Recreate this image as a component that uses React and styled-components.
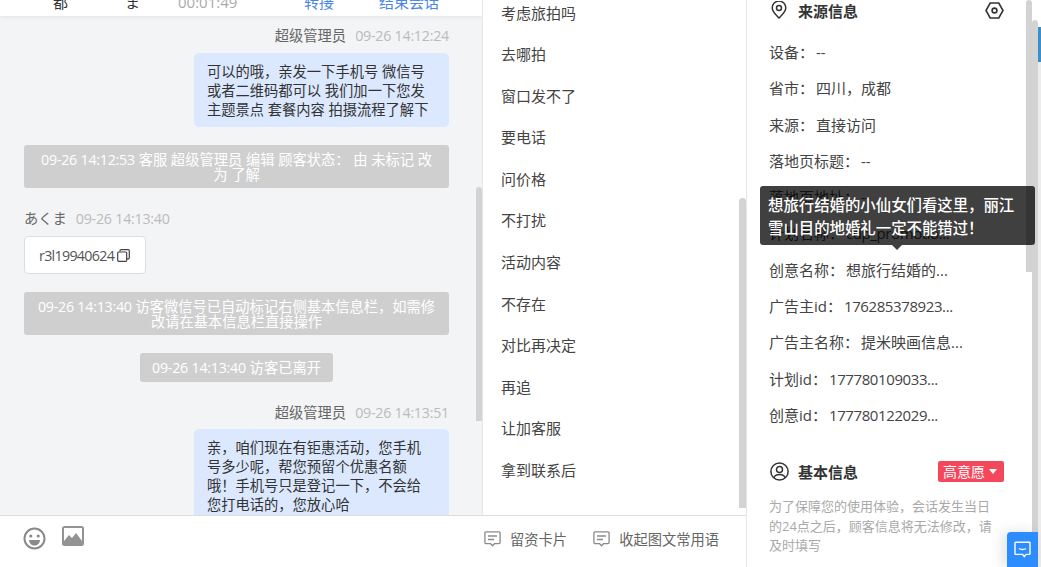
import React from 'react';
import styled, { createGlobalStyle } from 'styled-components';

const Global = createGlobalStyle`
  html, body { margin: 0; padding: 0; background: #fff; overflow: hidden; }
  * { box-sizing: border-box; }
  body { font-family: "Open Sans", "Noto Sans CJK SC", sans-serif; font-size: 14.28px; color: #333; }
`;

const Page = styled.div`
  position: relative; width: 1041px; height: 567px; display: flex; overflow: hidden; background: #fff;
`;
const Workspace = styled.div`
  width: 747px; height: 567px; display: flex; flex-direction: column; border-right: 1px solid #e6e6e6;
`;
const Body = styled.div`
  flex: 1; min-height: 0; display: flex;
`;
const ChatColumn = styled.div`
  position: relative; width: 482px; display: flex; flex-direction: column; background: #f3f4f6; overflow: hidden;
`;
const SessionBar = styled.div`
  height: 16px; flex: none; background: #fff; overflow: hidden; box-shadow: 0 1px 4px rgba(0,0,0,.08); position: relative; z-index: 1;
`;
const SessionRow = styled.div`
  display: flex; height: 20px; margin-top: -8px; line-height: 20px; padding-left: 53px; font-size: 15px;
`;
const SessionCell = styled.span`
  width: ${p => p.$w}px; flex: none; color: ${p => p.$c || '#333'};
`;
const Messages = styled.div`
  flex: 1; min-height: 0; padding: 10px 33px 0 24px; display: flex; flex-direction: column; overflow: hidden;
`;
const Meta = styled.div`
  display: flex; gap: 9px; height: 20px; line-height: 20px; justify-content: ${p => p.$left ? 'flex-start' : 'flex-end'}; color: #666; margin-top: ${p => p.$mt || 0}px; flex: none;
`;
const Stamp = styled.span`letter-spacing: -.25px;`;
const Time = styled(Stamp)`color: #bbb;`;
const Bubble = styled.div`
  align-self: flex-end; width: 255px; flex: none; margin-top: ${p => p.$mt || 7}px; padding: 9px 14px 8px 13px; background: #dbe8fe; border-radius: 5px; line-height: 19px; color: #333;
`;
const Notice = styled.div`
  align-self: ${p => p.$fit ? 'center' : 'stretch'}; flex: none; margin-top: 18px; padding: ${p => p.$fit ? '7px 12px' : '7px 12px 6px'}; background: #cfcfcf; border-radius: 3px; color: #fff; text-align: center; line-height: 15px;
`;
const ContactCard = styled.div`
  align-self: flex-start; flex: none; margin-top: 7px; width: 122px; height: 38px; display: flex; align-items: center; padding-left: 14px; gap: 3px; background: #fff; border: 1px solid #ddd; border-radius: 4px; color: #555; letter-spacing: -.7px;
`;
const Thumb = styled.div`
  position: absolute; background: #d3d3d3; border-radius: 4px 4px 0 0; width: ${p => p.$w || 6}px;
  left: ${p => p.$x}px; top: ${p => p.$y}px; height: ${p => p.$h}px; z-index: 2;
`;
const ReplyColumn = styled.div`
  position: relative; width: 264px; background: #fff; border-left: 1px solid #e6e6e6; overflow: hidden;
`;
const ReplyList = styled.ul`
  list-style: none; margin: -7.5px 0 0; padding: 0 0 0 18px;
`;
const ReplyItem = styled.li`
  height: 41.6px; line-height: 41.6px; color: #444; font-size: 15px;
`;
const Footer = styled.div`
  height: 52px; flex: none; border-top: 1px solid #ddd; display: flex; align-items: center; justify-content: space-between; padding: 0 27px 0 23px; background: #fff;
`;
const Tools = styled.div`
  display: flex; align-items: flex-start; gap: 16px; margin-top: -6px;
  svg:last-child { margin-top: -1px; }
`;
const Actions = styled.div`
  display: flex; align-items: center; gap: 26px; margin-top: -6px;
`;
const Action = styled.div`
  display: flex; align-items: center; gap: 9px; color: #666;
`;
const Panel = styled.aside`
  position: relative; flex: 1; min-width: 0; overflow: hidden; padding-left: 22px; background: #fff;
`;
const SectionHead = styled.div`
  display: flex; align-items: center; height: ${p => p.$h}px; width: 235px; margin-top: ${p => p.$mt || 0}px; margin-bottom: ${p => p.$mb || 0}px; font-weight: 700; font-size: 15px; color: #333;
`;
const HeadIcon = styled.span`
  display: flex; width: 29px; flex: none; padding-left: ${p => p.$pl || 0}px;
`;
const HeadTitle = styled.span`flex: 1;`;
const InfoRow = styled.div`
  height: 36.3px; line-height: 36.3px; color: #444; white-space: nowrap; font-size: 15px;
`;
const InfoValue = styled.span`
  margin-left: 2px; letter-spacing: ${p => p.$num ? '-.4px' : '0'};
`;
const Badge = styled.div`
  width: 66px; height: 21px; background: #f5475b; color: #fff; border-radius: 2px; font-weight: 400; font-size: 14px; display: flex; align-items: center; justify-content: flex-start; padding-left: 5px; gap: 4px;
`;
const Caret = styled.span`
  width: 0; height: 0; border-left: 4px solid transparent; border-right: 4px solid transparent; border-top: 5px solid #fff;
`;
const Hint = styled.p`
  margin: 15px 0 0; width: 232px; color: #a9a9a9; line-height: 19.5px; font-size: 13px;
`;
const Strip = styled.div`
  width: 3px; flex: none; background: linear-gradient(#fff 0 27px, #3a8fc8 27px 62px, #ececec 62px);
`;
const Tooltip = styled.div`
  position: absolute; left: 760px; top: 186px; width: 275px; height: 59px; padding: 8px 8px; background: rgba(0,0,0,.75); border-radius: 3px; color: #fff; line-height: 23px; font-size: 15.4px; font-weight: 500; z-index: 5;
  &::after { content: ''; position: absolute; left: 132px; top: 59px; border-left: 5px solid transparent; border-right: 5px solid transparent; border-top: 5px solid rgba(0,0,0,.75); }
`;
const Widget = styled.div`
  position: absolute; right: 3px; bottom: 0; width: 31px; height: 35px; background: #2d8cff; border-radius: 4px 0 0 0; display: flex; align-items: center; justify-content: center; box-shadow: -4px 0 14px rgba(0,0,0,.12); z-index: 4;
`;

const Copy = () => (
  <svg width="13" height="13" viewBox="0 0 13 13" fill="none" stroke="#444" strokeWidth="1.2">
    <rect x="0.7" y="3" width="9" height="9.3" rx="1" />
    <path d="M3 2.6V1.6a1 1 0 0 1 1-1h7.3a1 1 0 0 1 1 1v7.2a1 1 0 0 1-1 1h-1.400" />
  </svg>
);
const Smile = () => (
  <svg width="23" height="23" viewBox="0 0 23 23" fill="none">
    <circle cx="11.5" cy="11.5" r="10" stroke="#8a8a8a" strokeWidth="2" />
    <circle cx="7.8" cy="9" r="1.6" fill="#8a8a8a" />
    <circle cx="15.2" cy="9" r="1.6" fill="#8a8a8a" />
    <path d="M6 13h11a5.5 5.5 0 0 1-11 0z" fill="#8a8a8a" />
  </svg>
);
const Picture = () => (
  <svg width="22" height="20" viewBox="0 0 22 20">
    <rect width="22" height="20" rx="2.5" fill="#939393" />
    <rect x="2" y="2" width="18" height="13" fill="#fff" />
    <path d="M2 15l5-6 3 3 4-5 6 8v1H2z" fill="#939393" />
  </svg>
);
const Note = () => (
  <svg width="17" height="16" viewBox="0 0 17 16" fill="none" stroke="#8a8a8a" strokeWidth="1.3">
    <path d="M2 .9h13a1.100 1.100 0 0 1 1.100 1.100v9.600a1.100 1.100 0 0 1-1.100 1.100h-4.600l-1.900 2-1.900-2H2A1.100 1.100 0 0 1 .9 11.600V2A1.100 1.100 0 0 1 2 .9z" />
    <path d="M4 5h9M4 8.500h6" />
  </svg>
);
const Pin = () => (
  <svg width="16" height="18" viewBox="0 0 16 18" fill="none" stroke="#333" strokeWidth="1.5">
    <path d="M8 17C5 13.800 1.200 10.600 1.200 6.900a6.800 6.800 0 0 1 13.600 0C14.800 10.600 11 13.800 8 17z" />
    <circle cx="8" cy="7" r="2.5" />
  </svg>
);
const Hex = () => (
  <svg width="19" height="17" viewBox="0 0 19 17" fill="none" stroke="#333" strokeWidth="1.6">
    <path d="M5.200 1h8.600l4.200 7.500-4.200 7.500H5.200L1 8.500z" />
    <circle cx="9.5" cy="8.5" r="2.4" />
  </svg>
);
const User = () => (
  <svg width="19" height="19" viewBox="0 0 19 19" fill="none" stroke="#333" strokeWidth="1.5">
    <circle cx="9.5" cy="9.5" r="8.6" />
    <circle cx="9.5" cy="7.5" r="3" />
    <path d="M3.800 15.800c.8-2.400 3-3.400 5.700-3.400s4.900 1 5.700 3.400" />
  </svg>
);
const Chat = () => (
  <svg width="17" height="17" viewBox="0 0 17 17" fill="none" stroke="#fff" strokeWidth="1.4">
    <path d="M1.700 1.200h13.600a.7.7 0 0 1 .7.7v10.800a.7.7 0 0 1-.7.7h-3.200l-1.800 2.300-1.700-2.300H1.700a.7.7 0 0 1-.7-.7V1.900a.7.7 0 0 1 .7-.7z" />
    <path d="M5 7.500c1.800 1.300 5.200 1.300 7 0" />
  </svg>
);

const replies = ['考虑旅拍吗', '去哪拍', '窗口发不了', '要电话', '问价格', '不打扰', '活动内容', '不存在', '对比再决定', '再追', '让加客服', '拿到联系后'];
const sources = [
  ['设备：', '--'], ['省市：', '四川，成都'], ['来源：', '直接访问'], ['落地页标题：', '--'], ['落地页地址：', '--'],
  ['计划名称：', 'cdp_promotio...', true], ['创意名称：', '想旅行结婚的...'], ['广告主id：', '176285378923...', true],
  ['广告主名称：', '提米映画信息...'], ['计划id：', '177780109033...', true], ['创意id：', '177780122029...', true],
];

export default function App() {
  return (
    <Page>
      <Global />
      <Workspace>
        <Body>
          <ChatColumn>
            <SessionBar>
              <SessionRow>
                <SessionCell $w={72}>都</SessionCell>
                <SessionCell $w={53}>ま</SessionCell>
                <SessionCell $w={126} $c="#aaa">00:01:49</SessionCell>
                <SessionCell $w={75} $c="#4a86e8">转接</SessionCell>
                <SessionCell $w={70} $c="#4a86e8">结束会话</SessionCell>
              </SessionRow>
            </SessionBar>
            <Messages>
              <Meta><span>超级管理员</span><Time>09-26 14:12:24</Time></Meta>
              <Bubble>可以的哦，亲发一下手机号 微信号或者二维码都可以 我们加一下您发主题景点 套餐内容 拍摄流程了解下</Bubble>
              <Notice><Stamp>09-26 14:12:53</Stamp> 客服 超级管理员 编辑 顾客状态： 由 未标记 改为 了解</Notice>
              <Meta $left $mt={21}><span>あくま</span><Time>09-26 14:13:40</Time></Meta>
              <ContactCard>r3l19940624<Copy /></ContactCard>
              <Notice><Stamp>09-26 14:13:40</Stamp> 访客微信号已自动标记右侧基本信息栏，如需修改请在基本信息栏直接操作</Notice>
              <Notice $fit><Stamp>09-26 14:13:40</Stamp> 访客已离开</Notice>
              <Meta $mt={21}><span>超级管理员</span><Time>09-26 14:13:51</Time></Meta>
              <Bubble $mt={6}>亲，咱们现在有钜惠活动，您手机号多少呢，帮您预留个优惠名额哦！手机号只是登记一下，不会给您打电话的，您放心哈</Bubble>
            </Messages>
            <Thumb $x={476} $y={187} $h={234} />
          </ChatColumn>
          <ReplyColumn>
            <ReplyList>
              {replies.map(r => <ReplyItem key={r}>{r}</ReplyItem>)}
            </ReplyList>
            <Thumb $x={256} $y={198} $h={310} $w={7} />
          </ReplyColumn>
        </Body>
        <Footer>
          <Tools><Smile /><Picture /></Tools>
          <Actions>
            <Action><Note />留资卡片</Action>
            <Action><Note />收起图文常用语</Action>
          </Actions>
        </Footer>
      </Workspace>
      <Panel>
        <SectionHead $h={20} $mb={14}>
          <HeadIcon $pl={2}><Pin /></HeadIcon>
          <HeadTitle>来源信息</HeadTitle>
          <Hex />
        </SectionHead>
        {sources.map(([k, v, num]) => <InfoRow key={k}>{k}<InfoValue $num={num}>{v}</InfoValue></InfoRow>)}
        <SectionHead $h={22} $mt={27}>
          <HeadIcon $pl={1}><User /></HeadIcon>
          <HeadTitle>基本信息</HeadTitle>
          <Badge>高意愿<Caret /></Badge>
        </SectionHead>
        <Hint>为了保障您的使用体验，会话发生当日的24点之后，顾客信息将无法修改，请及时填写</Hint>
        <Thumb $x={279} $y={0} $h={272} />
        <Thumb $x={285} $y={20} $h={547} />
      </Panel>
      <Strip />
      <Widget><Chat /></Widget>
      <Tooltip>想旅行结婚的小仙女们看这里，丽江雪山目的地婚礼一定不能错过！</Tooltip>
    </Page>
  );
}
